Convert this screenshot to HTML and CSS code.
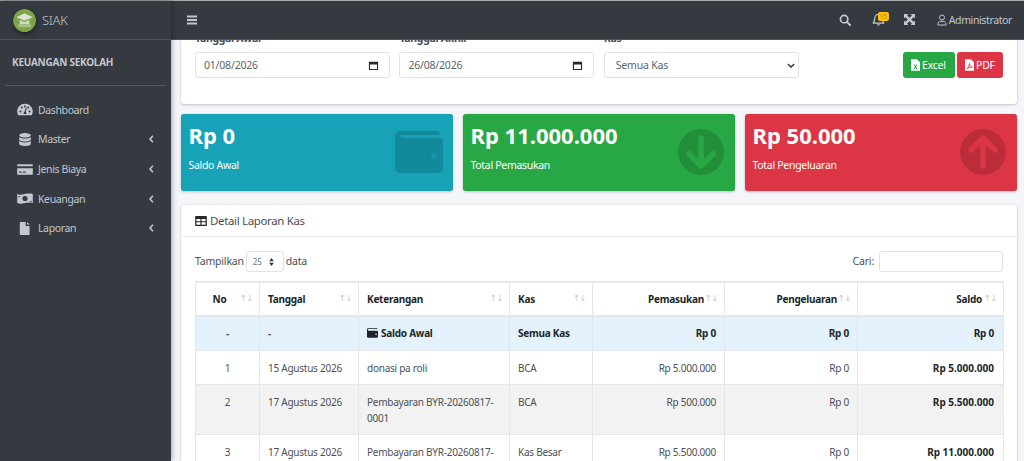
FILE: index.html
```html
<!DOCTYPE html>
<html lang="id">
<head>
<meta charset="utf-8">
<title>SIAK - Laporan Kas</title>
<link rel="stylesheet" href="styles.css">
</head>
<body>
<div class="app">
  <aside class="sidebar">
    <div class="brand">
      <svg class="logo" viewBox="0 0 24 24"><circle cx="12" cy="12" r="12" fill="#7da548"/><path d="M12 4.500 3.500 8.500 12 12l8.500-3.500z" fill="#dfe4da"/><path d="M7 11.500v4.500h10v-4.500L12 13.500z" fill="#cfd9c2"/><path d="M5 16.500c2.500-1 5-1 7 0 2-1 4.500-1 7 0V19H5z" fill="#a9c188"/></svg>
      <span class="brand-text">SIAK</span>
    </div>
    <div class="sb-title">KEUANGAN SEKOLAH</div>
    <nav class="menu">
      <a class="item"><svg class="mi" viewBox="0 0 24 20"><path fill-rule="evenodd" d="M12 1C5.400 1 0 6.300 0 13c0 2 .5 3.800 1.400 5.400.3.400.7.600 1.200.600h18.800c.5 0 .9-.2 1.200-.6.900-1.600 1.400-3.400 1.400-5.400C24 6.300 18.600 1 12 1zM5 14.500a1.500 1.500 0 1 1 0-3 1.500 1.500 0 0 1 0 3zM7 8.500a1.500 1.500 0 1 1 0-3 1.500 1.500 0 0 1 0 3zM12 4a1.500 1.500 0 1 1 0 3 1.500 1.500 0 0 1 0-3zm2 13h-4c-.3-2 .5-3.200 1.300-3.500L13.500 7l1.500.5-2 6c.8.500 1.200 2 1 3.500zm3-8.500a1.500 1.500 0 1 1 0-3 1.500 1.500 0 0 1 0 3zm2 6a1.500 1.500 0 1 1 0-3 1.500 1.500 0 0 1 0 3z"/></svg><span class="lbl">Dashboard</span></a>
      <a class="item"><svg class="mi" viewBox="0 0 24 20"><ellipse cx="12" cy="3.500" rx="9" ry="3.500"/><path d="M3 6v3.500c0 2 4 3.500 9 3.500s9-1.500 9-3.500V6c-1.500 1.800-5 2.600-9 2.600S4.500 7.800 3 6z"/><path d="M3 12v4.500C3 18.500 7 20 12 20s9-1.500 9-3.500V12c-1.500 1.800-5 2.600-9 2.600S4.500 13.800 3 12z"/></svg><span class="lbl">Master</span><svg class="chev" viewBox="0 0 6 10"><path d="M4.800 1 1.200 5l3.600 4"/></svg></a>
      <a class="item"><svg class="mi" viewBox="0 0 24 20"><path d="M1 2h22a1 1 0 0 1 1 1v2H0V3a1 1 0 0 1 1-1z"/><path fill-rule="evenodd" d="M0 8h24v9a1 1 0 0 1-1 1H1a1 1 0 0 1-1-1zm3 5v2h4v-2zm6 0v2h4v-2z"/></svg><span class="lbl">Jenis Biaya</span><svg class="chev" viewBox="0 0 6 10"><path d="M4.800 1 1.200 5l3.600 4"/></svg></a>
      <a class="item"><svg class="mi" viewBox="0 0 24 20"><path fill-rule="evenodd" d="M0 3c4 2 8 1 12 0s8-1 12 0v14c-4-1.500-8-1-12 0s-8 1.500-12 0zm12 3a4 4 0 1 0 0 8 4 4 0 0 0 0-8zM2 6v2.500A3 3 0 0 0 4.500 6zm17.500 8a3 3 0 0 0 2.500 2v-2.500z"/></svg><span class="lbl">Keuangan</span><svg class="chev" viewBox="0 0 6 10"><path d="M4.800 1 1.200 5l3.600 4"/></svg></a>
      <a class="item"><svg class="mi" viewBox="0 0 24 20"><path d="M5 0h8v6h6v13a1 1 0 0 1-1 1H5a1 1 0 0 1-1-1V1a1 1 0 0 1 1-1zm10 0 4 4h-4z"/></svg><span class="lbl">Laporan</span><svg class="chev" viewBox="0 0 6 10"><path d="M4.800 1 1.200 5l3.600 4"/></svg></a>
    </nav>
  </aside>

  <main class="main">
    <header class="navbar">
      <svg class="bars" viewBox="0 0 10 10"><path d="M0 .5h10v2H0zM0 4h10v2H0zM0 7.500h10v2H0z"/></svg>
      <div class="nav-right">
        <svg class="nic search" viewBox="0 0 14 14"><circle cx="6" cy="6" r="4.300" fill="none" stroke="#c2c7d0" stroke-width="2"/><path d="m9.200 9.200 3.600 3.600" stroke="#c2c7d0" stroke-width="2.400" stroke-linecap="round"/></svg>
        <span class="bell"><svg class="nic" viewBox="0 0 14 14"><path d="M7 1.500c-2.500 0-4 2-4 4.200 0 2.800-.8 3.800-1.500 4.600v.7h11v-.7c-.7-.8-1.500-1.800-1.500-4.600 0-2.200-1.500-4.200-4-4.200z" fill="none" stroke="#c2c7d0" stroke-width="1.300"/><path d="M5.500 12h3a1.500 1.500 0 0 1-3 0z" fill="#c2c7d0"/></svg><span class="badge">15</span></span>
        <svg class="nic expand" viewBox="0 0 14 14"><path d="M0 0h5.500L4 1.800l3 3 3-3L8.500 0H14v5.500L12.200 4l-3 3 3 3L14 8.500V14H8.500l1.500-1.800-3-3-3 3L5.500 14H0V8.500L1.800 10l3-3-3-3L0 5.500z" fill="#c2c7d0"/></svg>
        <span class="user"><svg class="uic" viewBox="0 0 12 14"><circle cx="6" cy="4" r="3" fill="none" stroke="#c2c7d0" stroke-width="1.200"/><path d="M1 12.500c0-2.500 1.500-3.800 3-3.800h4c1.500 0 3 1.300 3 3.800v.5H1z" fill="none" stroke="#c2c7d0" stroke-width="1.200"/></svg>Administrator</span>
      </div>
    </header>

    <div class="view">
      <div class="content">
        <section class="card filter">
          <div class="field"><label>Tanggal Awal</label><div class="ctl"><span>01/08/2026</span><svg class="cal" viewBox="0 0 12 12"><path fill-rule="evenodd" d="M1 2h10v9H1zm1.200 3v4.800h7.600V5z" fill="#26292c"/></svg></div></div>
          <div class="field"><label>Tanggal Akhir</label><div class="ctl"><span>26/08/2026</span><svg class="cal" viewBox="0 0 12 12"><path fill-rule="evenodd" d="M1 2h10v9H1zm1.200 3v4.800h7.600V5z" fill="#26292c"/></svg></div></div>
          <div class="field"><label>Kas</label><div class="ctl sel"><span>Semua Kas</span><svg class="cv" viewBox="0 0 10 6"><path d="m1 1 4 4 4-4" fill="none" stroke="#343a40" stroke-width="1.800"/></svg></div></div>
          <div class="actions">
            <a class="btn green"><svg class="bic" viewBox="0 0 10 13"><path d="M0 0h6.500L10 3.500V13H0z" fill="#fff"/><path d="m2.800 6 1.600 2.300L2.800 11h1.300l.9-1.600.9 1.600h1.300L5.600 8.300 7.200 6H5.900L5 7.500 4.100 6z" fill="#28a745"/></svg>Excel</a>
            <a class="btn red"><svg class="bic" viewBox="0 0 10 13"><path d="M0 0h6.500L10 3.500V13H0z" fill="#fff"/><path d="M2 11c1.500-1 2.500-3.500 2.800-6 .5 2.500 1.500 3.500 3.200 3.700-2 0-4.500 1-6 2.300z" fill="none" stroke="#dc3545"/></svg>PDF</a>
          </div>
        </section>

        <section class="stats">
          <div class="stat info"><div class="amt">Rp 0</div><div class="cap">Saldo Awal</div>
            <svg class="sic wallet" viewBox="0 0 48 42"><path d="M5 0h37a3 3 0 0 1 3 3v1H7a1.500 1.500 0 0 0 0 3h37a4 4 0 0 1 4 4v26a5 5 0 0 1-5 5H5a5 5 0 0 1-5-5V5a5 5 0 0 1 5-5z"/><circle cx="39" cy="25" r="3" class="dot"/></svg></div>
          <div class="stat success"><div class="amt">Rp 11.000.000</div><div class="cap">Total Pemasukan</div>
            <svg class="sic circ" viewBox="0 0 46 46"><circle cx="23" cy="23" r="23"/><path class="arrow" d="M23 9v27M11 25l12 12 12-12"/></svg></div>
          <div class="stat danger"><div class="amt">Rp 50.000</div><div class="cap">Total Pengeluaran</div>
            <svg class="sic circ" viewBox="0 0 46 46"><circle cx="23" cy="23" r="23"/><path class="arrow" d="M23 37V10M11 21 23 9l12 12"/></svg></div>
        </section>

        <section class="card report">
          <div class="card-head"><svg class="tic" viewBox="0 0 14 12"><path fill-rule="evenodd" d="M1 0h12a1 1 0 0 1 1 1v10a1 1 0 0 1-1 1H1a1 1 0 0 1-1-1V1a1 1 0 0 1 1-1zm.5 3.500v2.700h4.800V3.500zm6.200 0v2.700h4.800V3.500zm-6.200 4v3h4.800v-3zm6.200 0v3h4.800v-3z"/></svg>Detail Laporan Kas</div>
          <div class="card-body">
            <div class="dt-top">
              <div class="dt-len"><span class="dt-txt">Tampilkan</span><span class="len-sel"><span>25</span><svg viewBox="0 0 6 10"><path d="M3 0 6 4H0zM3 10 0 6h6z" fill="#343a40"/></svg></span><span class="dt-txt">data</span></div>
              <div class="dt-search"><span class="dt-txt">Cari:</span><span class="search-box"></span></div>
            </div>
            <table class="tbl">
              <colgroup><col class="c1"><col class="c2"><col class="c3"><col class="c4"><col class="c5"><col class="c6"><col class="c7"></colgroup>
              <thead><tr>
                <th class="ctr"><span class="th-in">No</span><i class="sort">↑↓</i></th>
                <th><span class="th-in">Tanggal</span><i class="sort">↑↓</i></th>
                <th><span class="th-in">Keterangan</span><i class="sort">↑↓</i></th>
                <th><span class="th-in">Kas</span><i class="sort">↑↓</i></th>
                <th class="num"><span class="th-in">Pemasukan</span><i class="sort">↑↓</i></th>
                <th class="num"><span class="th-in">Pengeluaran</span><i class="sort">↑↓</i></th>
                <th class="num"><span class="th-in">Saldo</span><i class="sort">↑↓</i></th>
              </tr></thead>
              <tbody>
                <tr class="open">
                  <td class="ctr">-</td><td>-</td>
                  <td><svg class="wi" viewBox="0 0 14 12"><path d="M1.500 0h11a1 1 0 0 1 1 1H2a.5.5 0 0 0 0 2h10.500A1.500 1.500 0 0 1 14 4.500V10.500A1.500 1.500 0 0 1 12.500 12h-11A1.500 1.500 0 0 1 0 10.500v-9A1.500 1.500 0 0 1 1.500 0z"/><circle cx="11.500" cy="7.500" r="1" fill="#e3f2fd"/></svg>Saldo Awal</td>
                  <td>Semua Kas</td><td class="num">Rp 0</td><td class="num">Rp 0</td><td class="num">Rp 0</td>
                </tr>
                <tr><td class="ctr">1</td><td>15 Agustus 2026</td><td>donasi pa roli</td><td>BCA</td><td class="num">Rp 5.000.000</td><td class="num">Rp 0</td><td class="num strong">Rp 5.000.000</td></tr>
                <tr class="alt"><td class="ctr">2</td><td>17 Agustus 2026</td><td>Pembayaran BYR-20260817-0001</td><td>BCA</td><td class="num">Rp 500.000</td><td class="num">Rp 0</td><td class="num strong">Rp 5.500.000</td></tr>
                <tr><td class="ctr">3</td><td>17 Agustus 2026</td><td>Pembayaran BYR-20260817-0002</td><td>Kas Besar</td><td class="num">Rp 5.500.000</td><td class="num">Rp 0</td><td class="num strong">Rp 11.000.000</td></tr>
              </tbody>
            </table>
          </div>
        </section>
      </div>
    </div>
  </main>
</div>
</body>
</html>
```
FILE: styles.css
```css
* { box-sizing: border-box; }
html, body { margin: 0; height: 100%; overflow: hidden; }
body { font-family: "Noto Sans", "Open Sans", sans-serif; font-size: 10.5px; color: #495057; background: #f4f6f9; letter-spacing: -.2px; }
.app { display: flex; height: 461px; border-top: 1px solid #a9abad; }

.sidebar { width: 171px; flex: none; background: #343a40; color: #c2c7d0; box-shadow: 0 0 6px rgba(0,0,0,.45); position: relative; z-index: 3; }
.brand { height: 39px; display: flex; align-items: center; padding-left: 13px; gap: 6px; border-bottom: 1px solid #4b545c; }
.logo { width: 23px; height: 23px; box-shadow: 0 2px 4px rgba(0,0,0,.4); border-radius: 50%; }
.brand-text { font-size: 13px; color: #c2c7d0; font-weight: 300; letter-spacing: -.3px; }
.sb-title { margin: 0 5px; padding: 15px 7px 0; height: 46px; border-bottom: 1px solid #4f5962; font-size: 10px; font-weight: 700; color: #c2c7d0; letter-spacing: -.25px; }
.menu { display: flex; flex-direction: column; padding-top: 9px; }
.item { height: 29.67px; display: flex; align-items: center; padding: 0 17px 0 17px; }
.mi { width: 16px; height: 13px; fill: #c2c7d0; flex: none; margin-right: 5px; }
.lbl { flex: 1; font-size: 10.5px; letter-spacing: -.38px; }
.chev { width: 5px; height: 8px; fill: none; stroke: #c2c7d0; stroke-width: 2; }

.main { flex: 1; min-width: 0; display: flex; flex-direction: column; }
.navbar { height: 39px; flex: none; background: #343a40; display: flex; align-items: center; justify-content: space-between; padding: 0 12px 1px 16px; position: relative; z-index: 2; border-bottom: 1px solid #4b545c; }
.bars { width: 10px; height: 10px; fill: #c2c7d0; }
.nav-right { display: flex; align-items: center; color: #c2c7d0; font-size: 10.5px; letter-spacing: -.38px; }
.nic { width: 12px; height: 12px; display: block; }
.search { margin-right: 21px; }
.bell { position: relative; margin-right: 19px; display: block; }
.bell .nic { width: 13px; height: 13px; }
.badge { position: absolute; left: 6px; top: -1px; width: 11px; height: 9px; border-radius: 2px; background: #ffc107; color: #b08a12; font-size: 6.5px; line-height: 9px; text-align: center; letter-spacing: 0; }
.expand { width: 11px; height: 11px; }
.user { margin-left: 22px; display: flex; align-items: center; }
.uic { width: 10px; height: 12px; margin-right: 2px; }

.view { flex: 1; overflow: hidden; }
.content { margin-top: -16px; padding: 0 7px 0 10px; display: flex; flex-direction: column; }
.card { background: #fff; border-radius: 3px; box-shadow: 0 0 1px rgba(0,0,0,.13), 0 1px 3px rgba(0,0,0,.2); }
.filter { display: flex; height: 80px; padding: 10px 14px 0; gap: 9.6px; align-items: flex-start; }
.field { width: 194.8px; }
.field label { display: block; height: 18px; font-size: 10.5px; font-weight: 700; color: #495057; line-height: 8px; letter-spacing: -.3px; }
.ctl { height: 26px; border: 1px solid #dfe3e8; border-radius: 3px; display: flex; align-items: center; justify-content: space-between; padding: 0 10px 0 8px; font-size: 10.5px; color: #5c646b; }
.ctl.sel { padding: 0 3px 0 11px; }
.cal { width: 11px; height: 11px; }
.cv { width: 8px; height: 5px; }
.actions { margin-left: auto; display: flex; gap: 2px; margin-top: 18px; }
.btn { height: 26px; display: flex; align-items: center; padding: 0 8px; color: #fff; border-radius: 3px; font-size: 10.5px; gap: 2px; }
.btn.green { width: 52px; background: #28a745; }
.btn.red { width: 46px; background: #dc3545; }
.bic { width: 9px; height: 12px; flex: none; }

.stats { display: flex; gap: 10px; margin-top: 10px; }
.stat { flex: 1; height: 77px; border-radius: 3px; color: #fff; padding: 6px 7.5px 0; position: relative; box-shadow: 0 0 1px rgba(0,0,0,.13), 0 1px 3px rgba(0,0,0,.2); }
.info { background: #17a2b8; --stat: #17a2b8; }
.success { background: #28a745; --stat: #28a745; }
.danger { background: #dc3545; --stat: #dc3545; }
.amt { font-size: 22px; font-weight: 700; line-height: 30px; margin-bottom: 8px; letter-spacing: 0; }
.cap { font-size: 10.5px; line-height: 14px; letter-spacing: -.3px; }
.sic { position: absolute; fill: rgba(0,0,0,.15); }
.wallet { left: 214px; top: 17px; width: 48px; height: 42px; }
.dot { fill: var(--stat); opacity: .55; }
.circ { left: 215px; top: 15px; width: 46px; height: 46px; }
.arrow { fill: none; stroke: var(--stat); stroke-width: 5.5; stroke-linecap: round; stroke-linejoin: round; }

.report { margin-top: 14px; }
.card-head { height: 32px; display: flex; align-items: center; padding: 0 14px; font-size: 11.5px; letter-spacing: -.35px; color: #495057; border-bottom: 1px solid #e9ecef; }
.tic { width: 12px; height: 10px; fill: #23272b; margin-right: 3px; flex: none; }
.card-body { padding: 14px 14px 0; }
.dt-top { display: flex; justify-content: space-between; align-items: center; height: 21px; margin-bottom: 9px; }
.dt-txt { padding-bottom: 2px; }
.dt-len { display: flex; align-items: center; gap: 2px; }
.len-sel { width: 38px; height: 21px; border: 1px solid #dfe3e8; border-radius: 3px; display: flex; align-items: center; justify-content: space-between; padding: 0 9px 0 6px; font-size: 8px; color: #6c757d; }
.len-sel svg { width: 5px; height: 8px; }
.dt-search { display: flex; align-items: center; gap: 5px; }
.search-box { width: 124px; height: 21px; border: 1px solid #dfe3e8; border-radius: 3px; }

.tbl { width: 808px; border-collapse: collapse; table-layout: fixed; font-size: 10px; letter-spacing: -.25px; }
.c1 { width: 64px; } .c2 { width: 99px; } .c3 { width: 151px; } .c4 { width: 83px; } .c5 { width: 132px; } .c6 { width: 133px; } .c7 { width: 146px; }
.tbl th, .tbl td { border: 1px solid #e4e7ea; padding: 8.5px 8px; vertical-align: top; line-height: 16px; text-align: left; }
.tbl th { position: relative; height: 34px; padding: 0 24px 0 8px; color: #212529; font-weight: 700; border-bottom-width: 2px; vertical-align: middle; }
.tbl thead tr th { border-top-width: 2px; }
.tbl th.ctr, .tbl td.ctr { text-align: center; }
.tbl .num { text-align: right; }
.tbl th.num { padding-right: 20px; }
.tbl th.num:last-child { padding-right: 21px; }
.tbl td:last-child { padding-right: 9px; }
.sort { position: absolute; right: 6px; top: 9px; font-family: "DejaVu Sans", sans-serif; font-style: normal; font-weight: 400; font-size: 8.5px; line-height: 12px; color: #c4c8cc; letter-spacing: -.5px; }
.tbl .num.strong { font-weight: 700; color: #212529; letter-spacing: 0; }
.open td { background: #e3f2fd; font-weight: 700; color: #212529; padding-top: 8px; padding-bottom: 9px; }
.open td.ctr, .open td:nth-child(2) { color: #495057; }
.alt td { background: #f2f2f2; }
.wi { width: 11px; height: 10px; fill: #212529; margin-right: 3px; vertical-align: -1px; }
```
